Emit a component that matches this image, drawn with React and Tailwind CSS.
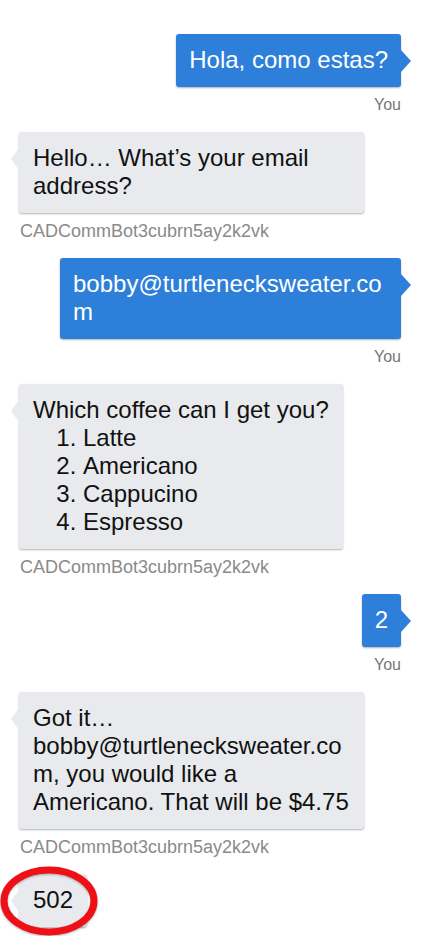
const NAME = 'CADCommBot3cubrn5ay2k2vk';

function UserMessage({ children }) {
  return (
    <div className="flex flex-col items-end">
      <div className="relative max-w-[341px] rounded-[3px] bg-[#2d7fd9] px-[13px] pt-[12px] pb-[13px] text-[24px] leading-[28px] text-white break-words shadow-[0_1px_2px_rgba(0,0,0,0.3)]">
        {children}
        <span className="absolute top-[16px] -right-[10px] h-0 w-0 border-y-[11px] border-l-[10px] border-y-transparent border-l-[#2d7fd9]" />
      </div>
      <div className="mt-[8px] h-[20px] text-[16px] leading-[20px] text-[#777]">You</div>
    </div>
  );
}

function BotMessage({ children, name = true }) {
  return (
    <div className="flex flex-col items-start">
      <div className="relative max-w-[345px] rounded-[3px] bg-[#e8eaed] px-[14px] pt-[12px] pb-[13px] text-[24px] leading-[28px] text-[#111] break-words shadow-[0_1px_2px_rgba(0,0,0,0.3)]">
        {children}
        <span className="absolute top-[16px] -left-[8px] h-0 w-0 border-y-[11px] border-r-[8px] border-y-transparent border-r-[#e8eaed]" />
      </div>
      {name && (
        <div className="mt-[8px] h-[20px] pl-[1px] text-[18px] leading-[20px] text-[#8a8a8a]">{NAME}</div>
      )}
    </div>
  );
}

export default function App() {
  return (
    <div className="h-[936px] overflow-hidden bg-white font-[family-name:Liberation_Sans,Arial,sans-serif]">
      <div className="flex flex-col gap-[17px] pt-[34px] pl-[19px] pr-[27px]">
        <UserMessage>Hola, como estas?</UserMessage>
        <BotMessage>Hello… What’s your email address?</BotMessage>
        <UserMessage>bobby@turtlenecksweater.com</UserMessage>
        <BotMessage>
          <div>Which coffee can I get you?</div>
          <ol className="list-decimal pl-[50px]">
            <li>Latte</li>
            <li>Americano</li>
            <li>Cappucino</li>
            <li>Espresso</li>
          </ol>
        </BotMessage>
        <UserMessage>2</UserMessage>
        <BotMessage>
          Got it… bobby@turtlenecksweater.com, you would like a Americano. That will be $4.75
        </BotMessage>
        <div className="relative self-start">
          <BotMessage name={false}>502</BotMessage>
          <svg
            className="pointer-events-none absolute -left-[19px] -top-[8px] drop-shadow-[0_1px_1px_rgba(0,0,0,0.3)]"
            width="104"
            height="72"
            viewBox="0 0 104 72"
          >
            <ellipse cx="49" cy="35" rx="45" ry="31" fill="none" stroke="#ee0f17" strokeWidth="7" />
          </svg>
        </div>
      </div>
    </div>
  );
}
